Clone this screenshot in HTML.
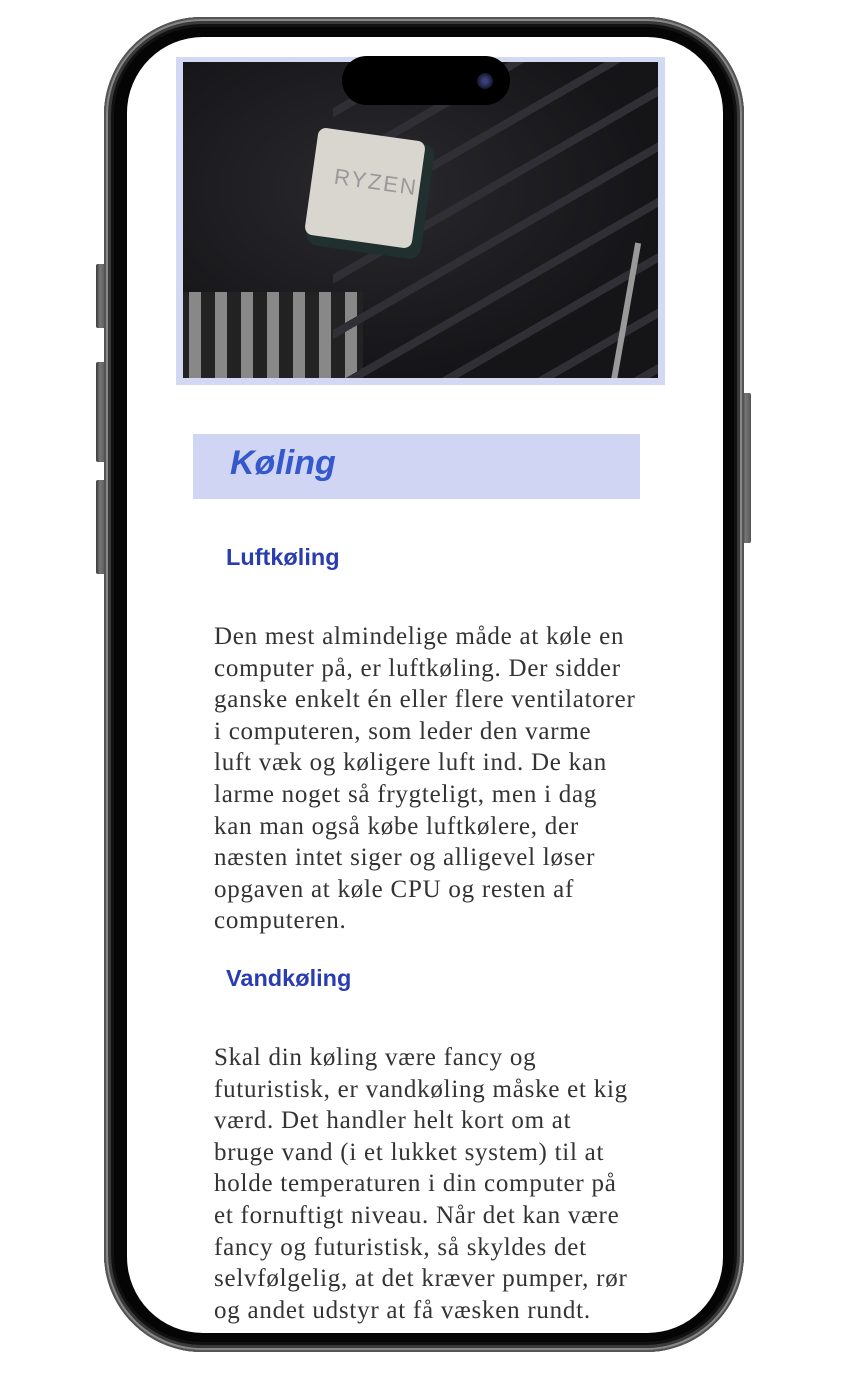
<!DOCTYPE html>
<html><head><meta charset="utf-8"><style>
*{margin:0;padding:0;box-sizing:border-box}
html,body{width:850px;height:1386px;background:#fff;overflow:hidden;position:relative}
.btn{position:absolute;background:linear-gradient(90deg,#3a3a3a,#777 40%,#555);border-radius:2px}
.phone{position:absolute;left:104px;top:17px;width:640px;height:1335px;border-radius:98px;background:#050505;
box-shadow:inset 0 0 0 2px #555,inset 0 0 0 4px #888,inset 0 0 0 7px #3a3a3a,inset 0 0 0 10px #111}
.screen{position:absolute;left:127px;top:37px;width:596px;height:1296px;border-radius:76px;background:#fff;overflow:hidden}
.island{position:absolute;left:342px;top:56px;width:168px;height:49px;border-radius:25px;background:#000;z-index:5}
.cam{position:absolute;left:477px;top:73px;width:16px;height:16px;border-radius:50%;background:radial-gradient(circle,#3a3f7a 20%,#15172a 70%);z-index:6}
.imgbox{position:absolute;left:49px;top:20px;width:489px;height:328px;background:#d3d8f3}
.photo{position:absolute;left:7px;top:5px;width:475px;height:316px;overflow:hidden;
background:radial-gradient(ellipse at 40% 40%,#2a2a2e,#151518 70%)}
.chip{position:absolute;left:128px;top:72px;width:108px;height:108px;border-radius:8px;background:#d9d6d0;transform:rotate(8deg);box-shadow:6px 6px 0 4px #20302e}
.chip span{position:absolute;left:22px;top:34px;font:22px "Liberation Sans",sans-serif;color:#999;letter-spacing:2px}
.h1box{position:absolute;left:66px;top:397px;width:447px;height:65px;background:#cfd5f2}
.h1box span{position:absolute;left:37px;top:10px;font:italic bold 34px "Liberation Sans",sans-serif;color:#3558cc}
.h2{position:absolute;left:99px;font:bold 23.5px "Liberation Sans",sans-serif;color:#2a3db0}
.p{position:absolute;left:87px;font:25px/31.6px "Liberation Serif",serif;color:#333;white-space:nowrap;letter-spacing:0.75px}
</style></head><body>
<div class="btn" style="left:96px;top:264px;width:10px;height:64px"></div>
<div class="btn" style="left:96px;top:362px;width:10px;height:100px"></div>
<div class="btn" style="left:96px;top:480px;width:10px;height:94px"></div>
<div class="btn" style="left:742px;top:393px;width:9px;height:150px"></div>
<div class="phone"></div>
<div class="screen">
 <div class="imgbox"><div class="photo">
  <div style="position:absolute;left:-20px;top:230px;width:200px;height:100px;background:repeating-linear-gradient(90deg,#888 0 12px,#222 12px 26px)"></div>
  <div style="position:absolute;left:150px;top:0;width:330px;height:316px;background:repeating-linear-gradient(150deg,transparent 0 40px,#2f2f35 40px 48px)"></div>
  <div class="chip"><span>RYZEN</span></div>
  <div style="position:absolute;left:440px;top:180px;width:6px;height:140px;background:#999;transform:rotate(10deg)"></div>
 </div></div>
 <div class="h1box"><span>Køling</span></div>
 <div class="h2" style="top:507px">Luftkøling</div>
 <div class="p" style="top:584px">Den mest almindelige måde at køle en<br>computer på, er luftkøling. Der sidder<br>ganske enkelt én eller flere ventilatorer<br>i computeren, som leder den varme<br>luft væk og køligere luft ind. De kan<br>larme noget så frygteligt, men i dag<br>kan man også købe luftkølere, der<br>næsten intet siger og alligevel løser<br>opgaven at køle CPU og resten af<br>computeren.</div>
 <div class="h2" style="top:928px">Vandkøling</div>
 <div class="p" style="top:1005px">Skal din køling være fancy og<br>futuristisk, er vandkøling måske et kig<br>værd. Det handler helt kort om at<br>bruge vand (i et lukket system) til at<br>holde temperaturen i din computer på<br>et fornuftigt niveau. Når det kan være<br>fancy og futuristisk, så skyldes det<br>selvfølgelig, at det kræver pumper, rør<br>og andet udstyr at få væsken rundt.</div>
</div>
<div class="island"></div><div class="cam"></div>
</body></html>
